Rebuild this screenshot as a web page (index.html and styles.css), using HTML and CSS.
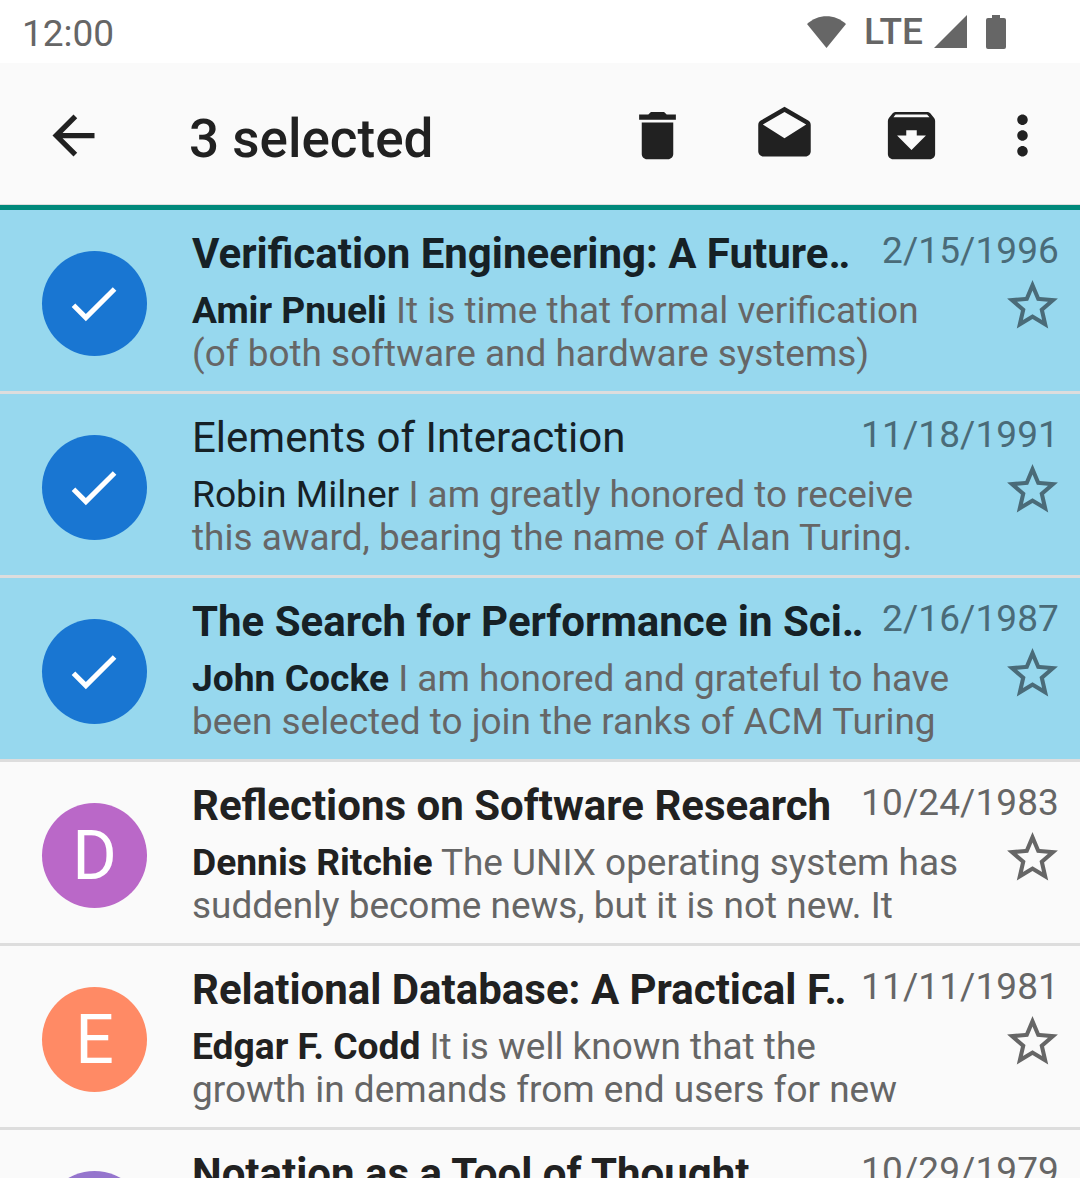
FILE: index.html
```html
<!DOCTYPE html>
<html lang="en">
<head>
    <meta charset="UTF-8">
    <meta name="viewport" content="width=device-width, initial-scale=1.0">
    <title>Inbox</title>
    <link rel="stylesheet" href="styles.css">
</head>
<body>
    <!-- Shared icons -->
    <svg class="defs" width="0" height="0">
        <symbol id="star" viewBox="0 0 24 24"><path d="M22 9.24l-7.19-.62L12 2 9.190 8.630 2 9.240l5.460 4.730L5.820 21 12 17.270 18.180 21l-1.630-7.030L22 9.240zM12 15.400l-3.760 2.270 1-4.280-3.320-2.880 4.380-.38L12 6.100l1.710 4.040 4.380.38-3.320 2.880 1 4.280L12 15.400z"/></symbol>
        <symbol id="check" viewBox="0 0 24 24"><path d="M9 16.170L4.830 12l-1.410 1.410L9 19 21 7l-1.410-1.410z"/></symbol>
    </svg>

    <!-- Status bar -->
    <div class="status-bar">
        <span class="clock">12:00</span>
        <svg class="wifi" width="39" height="32" viewBox="0 0 39 32"><path d="M0 8 C11 -2.500 28 -2.500 39 8 L19.500 32 Z"/></svg>
        <span class="lte">LTE</span>
        <svg class="signal" width="33" height="33" viewBox="0 0 33 33"><path d="M33 0 V33 H0 Z"/></svg>
        <svg class="battery" width="20" height="34" viewBox="0 0 20 34"><path d="M6 0 H14 V3 H18 Q20 3 20 5 V32 Q20 34 18 34 H2 Q0 34 0 32 V5 Q0 3 2 3 H6 Z"/></svg>
    </div>

    <!-- Action bar -->
    <div class="action-bar">
        <svg class="icon" viewBox="0 0 24 24"><path d="M20 11H7.830l5.590-5.590L12 4l-8 8 8 8 1.410-1.410L7.830 13H20v-2z"/></svg>
        <h1 class="count">3 selected</h1>
        <svg class="icon" viewBox="0 0 24 24"><path d="M6 19c0 1.100.9 2 2 2h8c1.100 0 2-.9 2-2V7H6v12zM19 4h-3.500l-1-1h-5l-1 1H5v2h14V4z"/></svg>
        <svg class="icon act-read" viewBox="0 0 24 24"><path d="M21.990 8c0-.72-.37-1.350-.94-1.700L12 1 2.950 6.300C2.380 6.650 2 7.280 2 8v10c0 1.100.9 2 2 2h16c1.100 0 2-.9 2-2l-.01-10zM12 13L3.740 7.840 12 3l8.260 4.840L12 13z"/></svg>
        <svg class="icon act-archive" viewBox="0 0 24 24"><path d="M20.540 5.230l-1.390-1.680C18.880 3.210 18.470 3 18 3H6c-.47 0-.88.21-1.160.55L3.460 5.230C3.170 5.570 3 6.020 3 6.500V19c0 1.100.9 2 2 2h14c1.100 0 2-.9 2-2V6.500c0-.48-.17-.93-.46-1.270zM12 17.500L6.500 12H10v-2h4v2h3.500L12 17.500zM5.120 5l.81-1h12l.94 1H5.120z"/></svg>
        <svg class="icon act-more" viewBox="0 0 24 24"><path d="M12 8c1.100 0 2-.9 2-2s-.9-2-2-2-2 .9-2 2 .9 2 2 2zm0 2c-1.100 0-2 .9-2 2s.9 2 2 2 2-.9 2-2-.9-2-2-2zm0 6c-1.100 0-2 .9-2 2s.9 2 2 2 2-.9 2-2-.9-2-2-2z"/></svg>
    </div>
    <div class="accent-line"></div>

    <!-- Message list -->
    <div class="list">
        <div class="row selected unread">
            <div class="avatar check"><svg class="check-mark"><use href="#check"/></svg></div>
            <div class="body">
                <div class="top"><span class="subject">Verification Engineering: A Future‥</span><span class="date">2/15/1996</span></div>
                <div class="bottom">
                    <p class="preview"><b class="sender">Amir Pnueli</b> It is time that formal verification (of both software and hardware systems)</p>
                    <svg class="star"><use href="#star"/></svg>
                </div>
            </div>
        </div>
        <div class="row selected">
            <div class="avatar check"><svg class="check-mark"><use href="#check"/></svg></div>
            <div class="body">
                <div class="top"><span class="subject">Elements of Interaction</span><span class="date">11/18/1991</span></div>
                <div class="bottom">
                    <p class="preview"><b class="sender">Robin Milner</b> I am greatly honored to receive this award, bearing the name of Alan Turing.</p>
                    <svg class="star"><use href="#star"/></svg>
                </div>
            </div>
        </div>
        <div class="row selected unread">
            <div class="avatar check"><svg class="check-mark"><use href="#check"/></svg></div>
            <div class="body">
                <div class="top"><span class="subject">The Search for Performance in Sci‥</span><span class="date">2/16/1987</span></div>
                <div class="bottom">
                    <p class="preview"><b class="sender">John Cocke</b> I am honored and grateful to have been selected to join the ranks of ACM Turing</p>
                    <svg class="star"><use href="#star"/></svg>
                </div>
            </div>
        </div>
        <div class="row unread">
            <div class="avatar purple">D</div>
            <div class="body">
                <div class="top"><span class="subject">Reflections on Software Research</span><span class="date">10/24/1983</span></div>
                <div class="bottom">
                    <p class="preview"><b class="sender">Dennis Ritchie</b> The UNIX operating system has suddenly become news, but it is not new. It</p>
                    <svg class="star"><use href="#star"/></svg>
                </div>
            </div>
        </div>
        <div class="row unread">
            <div class="avatar orange">E</div>
            <div class="body">
                <div class="top"><span class="subject">Relational Database: A Practical F‥</span><span class="date">11/11/1981</span></div>
                <div class="bottom">
                    <p class="preview"><b class="sender">Edgar F. Codd</b> It is well known that the<br>growth in demands from end users for new</p>
                    <svg class="star"><use href="#star"/></svg>
                </div>
            </div>
        </div>
        <div class="row unread">
            <div class="avatar violet"></div>
            <div class="body">
                <div class="top"><span class="subject">Notation as a Tool of Thought</span><span class="date">10/29/1979</span></div>
            </div>
        </div>
    </div>
</body>
</html>
```

FILE: styles.css
```css
html, body {
    margin: 0;
    height: 1178px;
    overflow: hidden;
}

body {
    font-family: 'Roboto', sans-serif;
    background-color: #fafafa;
    color: #212121;
}

.defs {
    display: block;
    height: 0;
}

.status-bar {
    height: 63px;
    background-color: #fff;
    display: flex;
    align-items: center;
    padding: 0 74px 0 22px;
    box-sizing: border-box;
    color: #666;
    fill: #666;
}

.clock {
    font-size: 37px;
    margin-right: auto;
    margin-top: 4px;
}

.lte {
    font-size: 37px;
    margin: 0 11px 0 18px;
    font-weight: 500;
}

.signal {
    margin-right: 19px;
}

.action-bar {
    height: 142px;
    display: flex;
    align-items: center;
    padding: 4px 0 0 42px;
    box-sizing: border-box;
    border-bottom: 1px solid #ddd;
    fill: #212121;
}

.icon {
    width: 63px;
    height: 63px;
    flex-shrink: 0;
}

.count {
    font-size: 53px;
    font-weight: 500;
    margin: 6px 0 0 84px;
    width: 437px;
    flex-shrink: 0;
}

.act-read {
    margin-left: 64px;
}

.act-archive {
    margin-left: 64px;
}

.act-more {
    margin-left: 48px;
}

.accent-line {
    height: 5px;
    background-color: #00897b;
}

.list {
    display: flex;
    flex-direction: column;
    height: 968px;
    overflow: hidden;
}

.row {
    height: 184px;
    box-sizing: border-box;
    border-bottom: 3px solid #ddd;
    display: flex;
    padding-left: 42px;
    flex-shrink: 0;
}

.row.selected {
    background-color: #97d8ee;
}

.avatar {
    width: 105px;
    height: 105px;
    border-radius: 50%;
    margin-top: 41px;
    flex-shrink: 0;
    display: flex;
    align-items: center;
    justify-content: center;
    color: #fff;
    font-size: 68px;
}

.check {
    background-color: #1976d2;
}

.check-mark {
    width: 61px;
    height: 61px;
    margin-right: 2px;
    fill: #fff;
}

.purple {
    background-color: #ba68c8;
}

.orange {
    background-color: #ff8a65;
}

.violet {
    background-color: #9575cd;
}

.body {
    flex: 1;
    min-width: 0;
    margin-left: 45px;
    padding-right: 21px;
}

.top {
    display: flex;
    justify-content: space-between;
    align-items: flex-start;
    margin-top: 19px;
    height: 60px;
}

.subject {
    font-size: 42px;
    white-space: nowrap;
}

.unread .subject {
    font-weight: 700;
}

.selected .subject {
    color: #162126;
}

.date {
    font-size: 37px;
    color: #666;
    letter-spacing: 0.1px;
}

.selected .date {
    color: #4a6b78;
}

.bottom {
    display: flex;
    justify-content: space-between;
}

.preview {
    margin: 0;
    font-size: 36.95px;
    line-height: 43px;
    color: #666;
    width: 770px;
}

.sender {
    color: #212121;
    font-size: 37.2px;
    font-weight: 400;
}

.unread .sender {
    font-weight: 700;
}

.selected .sender {
    color: #162126;
}

.star {
    width: 61px;
    height: 61px;
    margin: -14px -4px 0 0;
    flex-shrink: 0;
    fill: #666;
}

.selected .star {
    fill: #4a6b78;
}
```
